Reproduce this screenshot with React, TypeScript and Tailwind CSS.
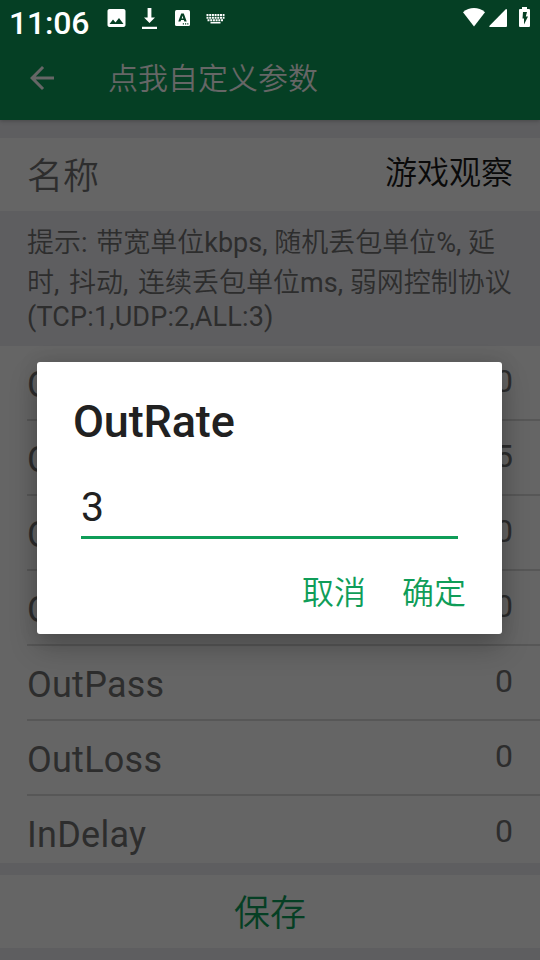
const params = [
  { name: 'OutRate', value: '0' },
  { name: 'OutBurst', value: '5' },
  { name: 'OutDelay', value: '0' },
  { name: 'OutJitter', value: '0' },
  { name: 'OutPass', value: '0' },
  { name: 'OutLoss', value: '0' },
  { name: 'InDelay', value: '0' },
];

function StatusBar() {
  return (
    <div className="flex h-9 items-start justify-between text-white">
      <div className="flex">
        <span className="ml-[9px] mt-[7px] w-[84px] text-[32px] font-medium leading-8 tracking-[-0.2px]">11:06</span>
        <svg className="ml-[11px] mt-1.5 size-6" viewBox="0 0 24 24" fill="currentColor">
          <path d="M21.500 19V5c0-1.100-.9-2-2-2h-14c-1.100 0-2 .9-2 2v14c0 1.100.9 2 2 2h14c1.100 0 2-.9 2-2zM9 13.500l2.500 3.010L15 12l4.500 6h-14l3.500-4.500z" />
        </svg>
        <svg className="ml-3.5 mt-[7px] h-[23px] w-[15px]" viewBox="0 0 15 23" fill="currentColor">
          <path d="M5.600 1h3.800v9.500h3.600L7.500 16 2 10.500h3.600zM0 19.800h15v2.100H0z" />
        </svg>
        <svg className="ml-[18px] mt-2.5 h-4 w-[15px]" viewBox="0 0 15 16">
          <rect width="15" height="16" rx="1.500" fill="currentColor" />
          <path fillRule="evenodd" d="M6.200 3.400h2.600l2.900 8.200H9.400l-.6-1.500H6.100l-.6 1.500H3.300zM7.500 5.800l-.8 2.600h1.600z" fill="#053f24" />
          <path d="M7.800 13.200h1.200v1.200H7.800zM10 13.200h1.200v1.200H10zM12.200 13.200h1.200v1.200h-1.200z" fill="#053f24" />
        </svg>
        <svg className="ml-4 mt-[13px] h-[11px] w-[19px]" viewBox="0 0 19 11" fill="none" stroke="currentColor">
          <path d="M.5 2h18M.5 4.700h18M1.500 7.300h16" strokeWidth="2" strokeDasharray="2 .7" />
          <path d="M4.500 9.700h10" strokeWidth="1.600" />
        </svg>
      </div>
      <div className="mr-[10px] mt-[7px] flex">
        <svg className="mt-px h-[19px] w-[22px]" viewBox="0 0 22 19" fill="currentColor">
          <path d="M0 4.200C6.500-1.400 15.500-1.400 22 4.200L11 18.500z" />
        </svg>
        <svg className="ml-1 mt-0.5 size-[18px]" viewBox="0 0 18 18" fill="currentColor">
          <path d="M17 0q1 0 1 1v16q0 1-1 1H1q-1 0-.7-1z" />
        </svg>
        <svg className="ml-3 h-5 w-[11px]" viewBox="0 0 11 20">
          <path d="M3 0h5v2h2q1 0 1 1v16q0 1-1 1H1q-1 0-1-1V3q0-1 1-1h2z" fill="currentColor" />
          <path d="M4 5h4L6.800 9.500H9L5 17.500v-6H3.500z" fill="#053f24" />
        </svg>
      </div>
    </div>
  );
}

function Header() {
  return (
    <header className="relative h-[120px] bg-[#053f24] shadow-[0_1px_4px_rgba(0,0,0,0.25)]">
      <StatusBar />
      <div className="flex items-start pl-6 text-[#666]">
        <svg className="mt-6 size-9" viewBox="0 0 24 24" fill="currentColor">
          <path d="M20 11H7.830l5.590-5.590L12 4l-8 8 8 8 1.410-1.410L7.830 13H20v-2z" />
        </svg>
        <h1 className="ml-12 mt-[28px] text-[30px] font-[350] leading-[30px]">点我自定义参数</h1>
      </div>
    </header>
  );
}

function Dialog() {
  return (
    <div className="absolute left-[37px] top-[362px] flex h-[272px] w-[465px] flex-col rounded-[3px] bg-white shadow-[0_14px_28px_rgba(0,0,0,0.22),0_0_20px_rgba(0,0,0,0.12)]">
      <h2 className="ml-9 mt-[37px] text-[45px] font-medium leading-[46px] tracking-[-0.15px] text-[#212121]">OutRate</h2>
      <div className="mx-11 mt-[38px] h-14 border-b-3 border-[#0f9d58] text-[41px] leading-[48px] text-[#212121]">3</div>
      <div className="mr-9 mt-[38px] flex justify-end gap-9 text-[32px] font-[350] leading-8 text-[#0f9d58]">
        <button className="whitespace-nowrap">取消</button>
        <button className="whitespace-nowrap">确定</button>
      </div>
    </div>
  );
}

export default function App() {
  return (
    <main className="relative flex h-[960px] w-[540px] flex-col overflow-hidden bg-[#5e5e60] font-[Roboto,'Noto_Sans_CJK_SC_DemiLight','Noto_Sans_CJK_SC',sans-serif] text-[#2d2d2d]">
      <Header />
      <section className="mt-[18px] flex h-[73px] shrink-0 justify-between bg-[#656565] px-[27px] font-[350]">
        <span className="mt-[21px] text-[36px] leading-9">名称</span>
        <span className="mt-[19px] text-[32px] leading-8 text-[#0a0a0a]">游戏观察</span>
      </section>
      <p className="h-[135px] shrink-0 whitespace-nowrap pl-[27px] pt-[13px] text-[27px]">
        <span className="block h-[39px] leading-[39px]">
          提示:<span className="tracking-[2px]"> </span>带宽单位kbps, 随机丢包单位%, 延
        </span>
        <span className="block h-10 leading-10">
          时<span className="tracking-[1.500px]">, </span>抖动<span className="tracking-[1.500px]">, </span>
          连续丢包单位ms, 弱网控制协议
        </span>
        <span className="block h-[29px] leading-[29px] tracking-[0.15px]">(TCP:1,UDP:2,ALL:3)</span>
      </p>
      <ul className="h-[517px] shrink-0 overflow-hidden bg-[#656565] pl-[27px]">
        {params.map((p) => (
          <li key={p.name} className="flex h-[75px] justify-between border-b-2 border-[#575757] pr-[27px]">
            <span className="mt-[21px] text-[36px] leading-9 tracking-[0.25px]">{p.name}</span>
            <span className="mt-[19px] text-[32px] leading-8">{p.value}</span>
          </li>
        ))}
      </ul>
      <button className="mt-3 h-[73px] shrink-0 bg-[#656565] pt-1 text-[36px] font-[350] leading-9 text-[#053f24]">保存</button>
      <Dialog />
    </main>
  );
}
